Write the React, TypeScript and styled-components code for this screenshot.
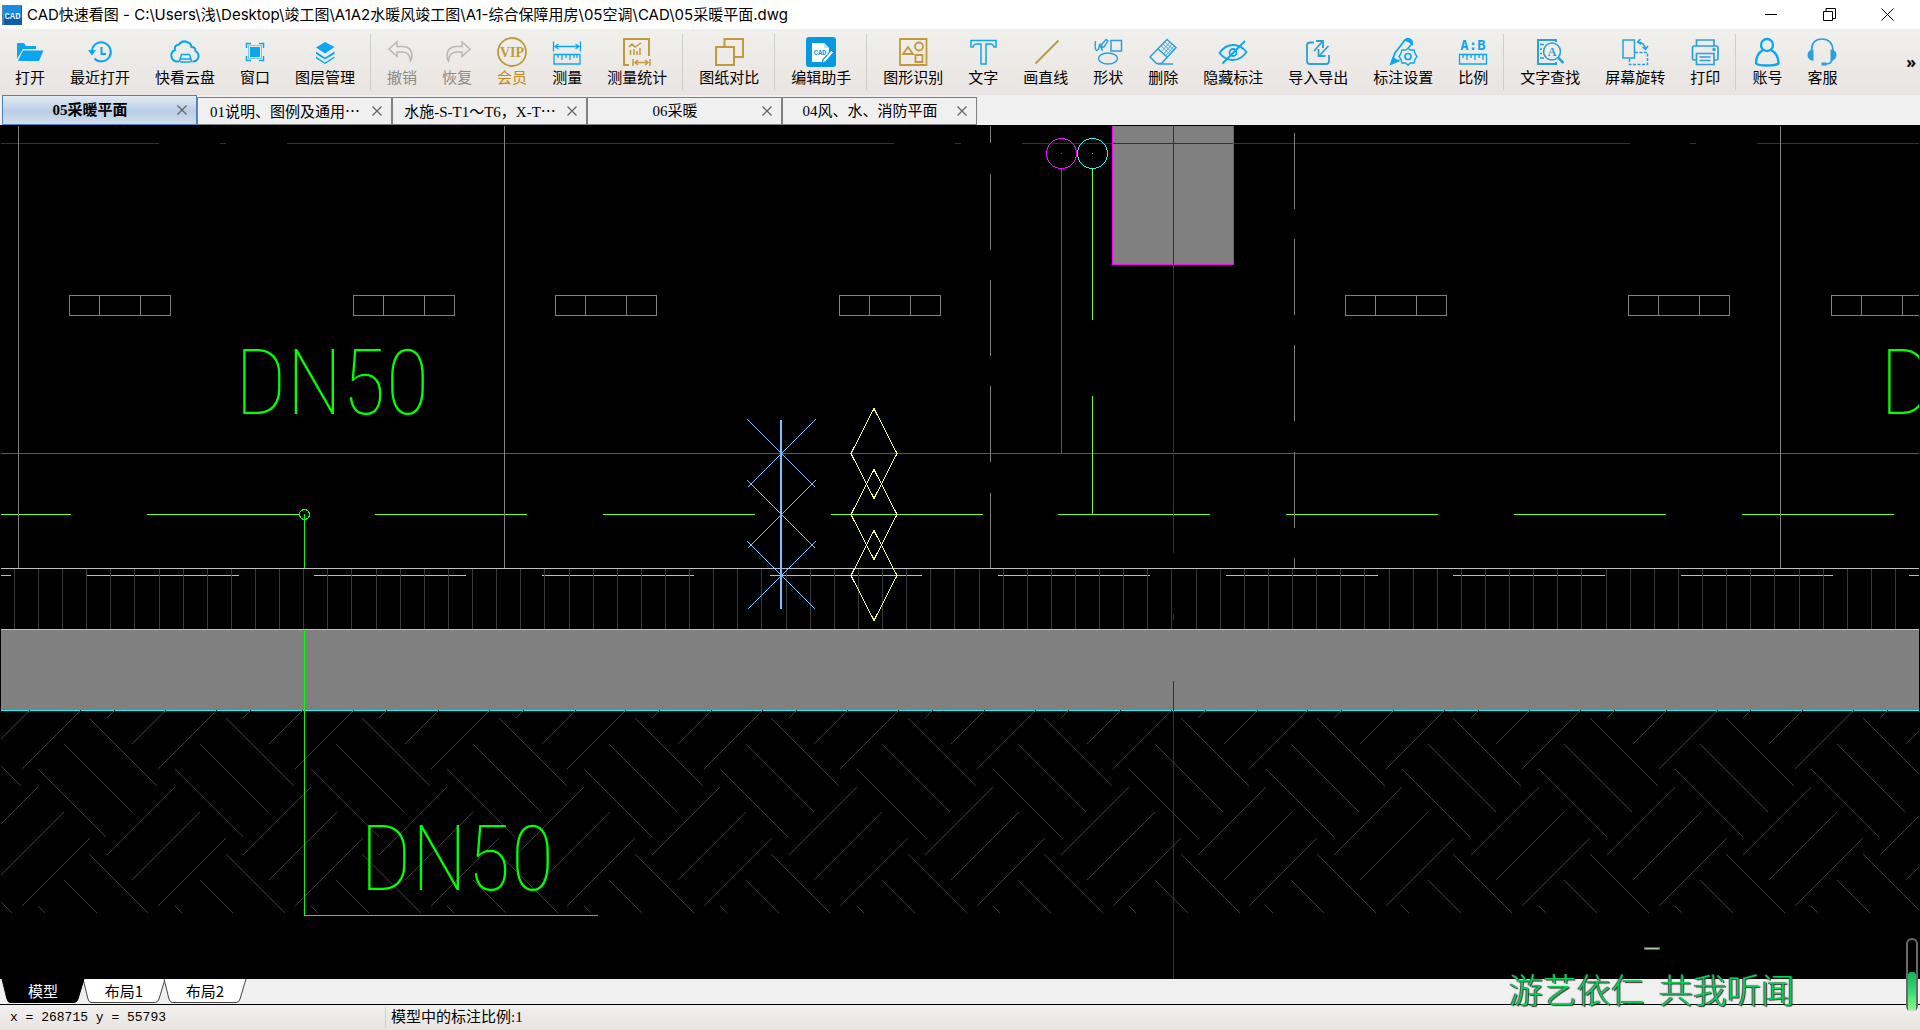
import React from "react";
import type { ReactNode } from "react";
import styled, { createGlobalStyle, css } from "styled-components";

const UI_FONT = `"Inter", "Noto Sans CJK SC", sans-serif`;
const CJK_FONT = `"Noto Sans CJK SC", sans-serif`;
const SONG_FONT = `"Liberation Serif", "Noto Sans CJK SC", sans-serif`;

const BLUE = "#0da6ee";
const STEEL = "#2ba0dc";
const GOLD = "#c09a3c";
const GREY = "#b8b8b6";

const GlobalStyle = createGlobalStyle`
  * { box-sizing: border-box; }
  body { margin: 0; background: #f0f0f0; overflow: hidden; }
  button { border: 0; padding: 0; margin: 0; background: none; color: inherit; font: inherit; }
`;

const Window = styled.main`
  display: flex;
  flex-direction: column;
  height: 100vh;
  font-family: ${CJK_FONT};
  font-size: 15px;
  color: #000;
`;

/* ---------- title bar ---------- */

const TitleBar = styled.header`
  display: flex;
  align-items: center;
  flex: none;
  height: 29px;
  padding: 0 4px 0 2px;
  background: #fff;
`;

const Title = styled.h1`
  flex: 1;
  margin: 0 0 0 5px;
  font: 400 15px/24px ${UI_FONT};
  white-space: nowrap;
`;

const CaptionButton = styled.button`
  display: flex;
  align-items: center;
  justify-content: center;
  width: 58px;
  height: 29px;
`;

/* ---------- toolbar ---------- */

const Toolbar = styled.nav`
  display: flex;
  flex: none;
  gap: 1px;
  height: 66px;
  padding: 0 4px 0 3px;
  background: linear-gradient(#f0f0ec, #e9e4e1);
`;

const Tool = styled.button<{ $tone?: "muted" | "gold" }>`
  display: flex;
  flex-direction: column;
  align-items: center;
  justify-content: flex-start;
  flex: none;
  padding: 8px 12px 0;
  font-size: 15px;
  line-height: 20px;
  white-space: nowrap;
  ${({ $tone }) => $tone === "muted" && css`color: #8c8a88;`}
  ${({ $tone }) => $tone === "gold" && css`color: #c08a22;`}
`;

const ToolDivider = styled.span`
  flex: none;
  width: 1px;
  margin: 5px 3px 5px 2px;
  background: #cdcfd0;
`;

const MoreButton = styled.button`
  margin-left: auto;
  font: 700 16px/60px "Noto Sans", sans-serif;
`;

/* ---------- document tabs ---------- */

const TabStrip = styled.div`
  display: flex;
  align-items: flex-end;
  flex: none;
  height: 30px;
  padding-left: 2px;
  background: #f0f0f0;
`;

const Tab = styled.div<{ $active?: boolean }>`
  display: flex;
  align-items: center;
  width: 195px;
  height: 28px;
  padding-right: 9px;
  border: 1px solid #808080;
  font-family: ${SONG_FONT};
  ${({ $active }) =>
    $active &&
    css`
      height: 30px;
      border-color: #4f81bd;
      font-weight: 700;
      background: linear-gradient(#e3ebf4, #b9cde5 55%, #d3dfec);
    `}
`;

const TabLabel = styled.button`
  flex: 1;
  line-height: 26px;
  white-space: nowrap;
`;

const Ellipsis = styled.span`
  font-family: ${CJK_FONT};
`;

const TabClose = styled.button`
  display: flex;
  width: 10px;
`;

/* ---------- drawing area ---------- */

const Canvas = styled.section`
  flex: 1;
  min-height: 0;
  background: #000;
`;

const Drawing = styled.svg`
  display: block;
  width: 100%;
  height: 100%;
  fill: none;
  shape-rendering: crispEdges;
`;

const PipeLabel = styled.text`
  fill: #00ff00;
  font: 100 90px "Roboto Condensed", "Roboto", sans-serif;
`;

/* ---------- layout tabs and status bar ---------- */

const LayoutStrip = styled.div`
  display: flex;
  flex: none;
  height: 26px;
  padding-left: 1px;
  border-bottom: 1px solid #000;
  background: #f0f0f0;
`;

const LayoutTab = styled.button<{ $active?: boolean }>`
  display: grid;
  place-items: center;
  width: 84px;
  height: 24px;
  margin-right: -3px;
  line-height: 24px;
  color: ${({ $active }) => ($active ? "#fff" : "#000")};
  z-index: ${({ $active }) => ($active ? 1 : 0)};

  > * {
    grid-area: 1 / 1;
  }
`;

const StatusBar = styled.footer`
  display: grid;
  grid-template-columns: 385px 1fr;
  align-items: center;
  flex: none;
  height: 25px;
  background: linear-gradient(#f0f0ec, #e9e4e1);
`;

const Coordinates = styled.output`
  padding-left: 10px;
  font: 13px/21px "Liberation Mono", monospace;
  white-space: pre;
`;

const ScaleNote = styled.span`
  padding-left: 5px;
  border-left: 1px solid #d0d0ce;
  font-family: ${SONG_FONT};
  line-height: 21px;
`;

/* ---------- desktop overlays ---------- */

const Lyric = styled.p`
  position: fixed;
  right: 125px;
  bottom: 18px;
  display: flex;
  gap: 14px;
  margin: 0;
  font: 300 34px/46px ${CJK_FONT};
  color: #04d455;
  text-shadow: 1px 1px 1px #333, -1px 0 1px #444;
`;

const Gauge = styled.div`
  position: fixed;
  right: 2px;
  bottom: 18px;
  display: flex;
  align-items: flex-end;
  width: 12px;
  height: 74px;
  border: 2px solid #6a6a6a;
  border-bottom-color: #d8d8d8;
  border-radius: 6px;
`;

const GaugeFill = styled.span`
  width: 8px;
  height: 38px;
  border-radius: 3px;
  background: linear-gradient(#12b458, #35d873 50%, #86ff86);
`;

const FloatDash = styled.span`
  position: fixed;
  right: 260px;
  bottom: 80px;
  width: 16px;
  height: 3px;
  border: 1px solid #4c6444;
  background: #a4cd98;
`;

/* ---------- icons ---------- */

const Icon = ({ color = BLUE, width = 1.5, children }: { color?: string; width?: number; children: ReactNode }) => (
  <svg width="30" height="30" viewBox="0 0 30 30" fill="none" stroke={color} strokeWidth={width} aria-hidden="true">
    {children}
  </svg>
);

const icons: Record<string, ReactNode> = {
  open: (
    <Icon>
      <path fill={BLUE} stroke="none" d="M2 7q0-1 1-1h6l2 3h10v3H8L2 22z" />
      <path fill={BLUE} stroke="none" d="M8 13.500h20.500L24 24H3z" />
    </Icon>
  ),
  recent: (
    <Icon width={2}>
      <path d="M7 13a9.500 9.500 0 1 1 2.500 8.500" />
      <path fill={BLUE} stroke="none" d="M3 13h8l-4 5.500z" />
      <path d="M16.500 10v7H21" />
    </Icon>
  ),
  cloud: (
    <Icon width={2}>
      <path d="M9 24.500H7A6 6 0 0 1 5 13q-1-5 4-5.500 3-4.500 8-2.500 4 1 4.500 5 4 0 4 4 3.500 2 3 6-1 4-5 4.500h-1" />
      <path strokeWidth="1.500" d="M11 25l-1.500-1 2-6.500h8l2 6.500-1.500 1zM10 22h11" />
    </Icon>
  ),
  window: (
    <Icon>
      <path d="M6.500 11V6.500H11M19 6.500h4.500V11M23.500 19v4.500H19M11 23.500H6.500V19" />
      <path fill={BLUE} stroke="none" d="M10 10h10v10H10z" />
      <path strokeWidth="1" d="M8.500 21.500v-13h13v13z" strokeOpacity=".5" />
    </Icon>
  ),
  layers: (
    <Icon>
      <path fill={BLUE} stroke="none" d="M15 5l9.500 5L15 16.500 6 10.500zM6 14.500l9 6 9.500-6v2.500L15 22.500 6 17zM6 19.500l9 6 9.500-6V21L15 27l-9-5.500z" />
    </Icon>
  ),
  undo: (
    <Icon color={GREY}>
      <path d="M2 12l8-7v4.500h6q9 .5 9 9.500 0 3-1.500 5-.5-9-8.500-9h-5v4.500z" />
    </Icon>
  ),
  redo: (
    <Icon color={GREY}>
      <path d="M28 12l-8-7v4.500h-6Q5 10 5 19q0 3 1.500 5Q7 15 15 15h5v4.500z" />
    </Icon>
  ),
  vip: (
    <Icon color={GOLD}>
      <circle cx="15" cy="15" r="14" strokeWidth="1.800" />
      <text x="15" y="20" textAnchor="middle" fontFamily="Liberation Serif, serif" fontWeight="700" fontSize="14" fill={GOLD} stroke="none">
        VIP
      </text>
    </Icon>
  ),
  measure: (
    <Icon width={1.3}>
      <path d="M1.500 4.500v10M28.500 4.500v10M3 9.500h24M6.500 7L3 9.500 6.500 12M23.500 7L27 9.500 23.500 12" />
      <path d="M2 17.500h26V27H2zM6 18v3M10 18v5M14 18v3M18 18v5M22 18v3M25 18v3" />
    </Icon>
  ),
  stats: (
    <Icon color={GOLD} width={2}>
      <path d="M7 28H2V2h25v17" />
      <path strokeWidth="1.500" d="M7 10l3-3 3 3 6-4M8.500 13v5M12 12v6M15 14v4M18 11v7" />
      <path d="M11 22v7M28 22v7M13 25.500h13M16 23l-3 2.500 3 2.500M23 23l3 2.500-3 2.500" strokeWidth="1.5" />
    </Icon>
  ),
  compare: (
    <Icon color={GOLD} width={2}>
      <path d="M10.500 10V2H29v18h-9" />
      <path d="M2 10h18v18H2z" />
    </Icon>
  ),
  editor: (
    <Icon color="none">
      <rect width="30" height="30" rx="3" fill="#0798e2" />
      <path fill="#fff" d="M6 6h12l5 5v4l-7 8v2H6z" />
      <path fill="#bfe4f8" d="M18 6l5 5h-5z" />
      <path fill="#fff" stroke="#0798e2" strokeWidth=".8" d="M25.500 13.500l2 2-8 9-3.500 1.500 1.500-3.500z" />
      <text x="14" y="18" textAnchor="middle" fontFamily="Liberation Mono, monospace" fontWeight="700" fontSize="7" fill="#0798e2">
        CAD
      </text>
    </Icon>
  ),
  shapesGold: (
    <Icon color={GOLD} width={1.8}>
      <path d="M2 2h26.500v26H2z" />
      <path d="M10 10l5 7H5zM17.500 18h7v7h-7z" />
      <circle cx="21" cy="9.500" r="4" />
    </Icon>
  ),
  text: (
    <Icon>
      <path d="M3 3.500h25V10h-2q-1-3-3-3h-5v20h-5V7H8q-2 0-3 3H3z" />
    </Icon>
  ),
  line: (
    <Icon color={GOLD} width={2}>
      <path d="M4.500 26.500l23-23" />
    </Icon>
  ),
  shapes: (
    <Icon color={STEEL}>
      <path d="M2.500 4q-1 9 1 9.500t3.500-7q1 6 3 7M8.500 11l.5-4L13 2.500l2 1.500-4 6z" />
      <path d="M18 3.500h10.500V14H18z" />
      <ellipse cx="15" cy="21.500" rx="9.500" ry="5.500" />
    </Icon>
  ),
  erase: (
    <Icon color={STEEL}>
      <path d="M19 2.500l9 8L13.500 26.500h-5L2 20zM10 12l9.500 8.500M10 27h15" />
      <path strokeWidth=".8" d="M17 5l9.500 8.500M15 7l9.500 8.500M13 9l9.500 8.500M22 5l-9 10M24 7l-8.500 10M26 9l-8.500 10" />
    </Icon>
  ),
  hide: (
    <Icon color={BLUE} width={1.8}>
      <path d="M1.500 16Q7 8 15 8t13.500 7Q23 23 15 23T1.500 16zM27 4L4.500 26.500" />
      <circle cx="15" cy="15.500" r="3.500" />
    </Icon>
  ),
  transfer: (
    <Icon color={STEEL} width={1.8}>
      <path d="M11 5.500H7q-3 0-3 3V24q0 3 3 3h16q3 0 3-3v-6" />
      <path d="M11 14l8-9M13 4h7v7M25.500 9L17 18M15.500 12v7h7" />
    </Icon>
  ),
  settings: (
    <Icon width={1.7}>
      <path d="M17 3L7 16 3.500 26l8-3M24 7l-4 4" />
      <path fill={BLUE} d="M17 3q4-3 7 1v3q-3-3-7-4zM5 21l5 3-7 3z" />
      <path d="M20 11.500l2.500 1.500h3.500l1 3.500 2 3-2 3-1 3.500h-3.500L20 28l-2.500-2H14l-1-3.500-2-3 2-3 1-3.500h3.500z" strokeWidth="1.400" />
      <circle cx="20" cy="19.500" r="3" />
    </Icon>
  ),
  ratio: (
    <Icon width={1.3}>
      <text x="15" y="13" textAnchor="middle" fontFamily="DejaVu Sans Mono, monospace" fontWeight="700" fontSize="14" fill={BLUE} stroke="none">
        A:B
      </text>
      <path d="M1.500 17.500h27V27h-27zM5 18v3M9 18v5M13 18v3M17 18v5M21 18v3M25 18v5" />
    </Icon>
  ),
  find: (
    <Icon color={STEEL} width={2}>
      <path d="M21 5V3H3v24h18v-2" />
      <path strokeWidth="1.300" d="M5 7.500h4M5 12h2M5 16.500h2M5 21h4" />
      <circle cx="17" cy="14.500" r="8.500" strokeWidth="1.600" />
      <path strokeWidth="2.500" d="M23 20.500l5.500 5.500" />
      <text x="17" y="18.500" textAnchor="middle" fontFamily="Liberation Serif, serif" fontWeight="700" fontSize="12" fill={STEEL} stroke="none">
        A
      </text>
    </Icon>
  ),
  rotate: (
    <Icon color={STEEL}>
      <path d="M3 3h11.500v18H3z" />
      <path strokeDasharray="3 1.500" d="M15 15.500h12.500v12h-18V21" />
      <path d="M18 5q6 0 7.500 7M20.500 2l-3 3 3.500 2.500M22.500 10l3 2.500 2.500-3.500" />
    </Icon>
  ),
  print: (
    <Icon color={STEEL} width={1.7}>
      <path d="M6.500 9V3H24v6M6.500 23H4q-1.500 0-1.500-1.500v-11Q2.500 9 4 9h22.500Q28 9 28 10.500v11q0 1.500-1.500 1.500H24" />
      <path d="M6.500 16.500H24v11H6.500zM9.500 20h11M9.500 23.500h11" />
      <circle cx="24" cy="12.500" r=".8" fill={STEEL} />
    </Icon>
  ),
  account: (
    <Icon width={2.3}>
      <circle cx="15" cy="8" r="6" />
      <path d="M11 13q-7 4-7 13.500 2 2 11 2t11.500-2Q26.500 17 19 13" />
    </Icon>
  ),
  support: (
    <Icon color={STEEL} width={1.7}>
      <path d="M4.500 15V13Q5 2 15 2t11 11v2M25 23q-1 4-6 4" />
      <path fill={STEEL} stroke="none" d="M6.500 12.500v11.500Q.5 23 .5 18t6-5.500zM23.500 12.500v11.500q6-1 6-6t-6-5.500zM14.500 25.500h5v3h-5z" />
    </Icon>
  ),
};

const toolGroups: { icon: string; label: string; tone?: "muted" | "gold" }[][] = [
  [
    { icon: "open", label: "打开" },
    { icon: "recent", label: "最近打开" },
    { icon: "cloud", label: "快看云盘" },
    { icon: "window", label: "窗口" },
    { icon: "layers", label: "图层管理" },
  ],
  [
    { icon: "undo", label: "撤销", tone: "muted" },
    { icon: "redo", label: "恢复", tone: "muted" },
    { icon: "vip", label: "会员", tone: "gold" },
    { icon: "measure", label: "测量" },
    { icon: "stats", label: "测量统计" },
  ],
  [{ icon: "compare", label: "图纸对比" }],
  [{ icon: "editor", label: "编辑助手" }],
  [
    { icon: "shapesGold", label: "图形识别" },
    { icon: "text", label: "文字" },
    { icon: "line", label: "画直线" },
    { icon: "shapes", label: "形状" },
    { icon: "erase", label: "删除" },
    { icon: "hide", label: "隐藏标注" },
    { icon: "transfer", label: "导入导出" },
    { icon: "settings", label: "标注设置" },
    { icon: "ratio", label: "比例" },
  ],
  [
    { icon: "find", label: "文字查找" },
    { icon: "rotate", label: "屏幕旋转" },
    { icon: "print", label: "打印" },
  ],
  [
    { icon: "account", label: "账号" },
    { icon: "support", label: "客服" },
  ],
];

const documents = [
  { name: "05采暖平面" },
  { name: "01说明、图例及通用", cut: true },
  { name: "水施-S-T1～T6，X-T", cut: true },
  { name: "06采暖" },
  { name: "04风、水、消防平面" },
];
const layouts = ["模型", "布局1", "布局2"];

/* ---------- plan drawing ---------- */

const range = (n: number) => Array.from({ length: n }, (_, i) => i);

const WALL_TOP = 629;
const WALL_BOTTOM = 710;
const HATCH_STEP = 136.4;
const HATCH_LENGTH = 68;

/* Lower end of each rising stroke and upper end of each falling one, within one hatch cell. */
const rising = [[21.2, 769.7], [131.8, 744], [106.1, 718.7]];
const falling = [[89.8, 718.5], [64.1, 744], [38.7, 769.7]];

const snap = (v: number) => Math.floor(v) + 0.5;

const EarthHatch = () => (
  <g stroke="#3a3a3a" clipPath="url(#earth)">
    {range(17).flatMap((col) =>
      range(4).map((row) => {
        const dx = (col - 1) * HATCH_STEP;
        const dy = (row - 1) * HATCH_STEP;
        return (
          <path
            key={`${col}-${row}`}
            d={[
              ...rising.map(([x, y]) => `M${snap(x + dx)} ${snap(y + dy)}l${HATCH_LENGTH} ${-HATCH_LENGTH}`),
              ...falling.map(([x, y]) => `M${snap(x + dx)} ${snap(y + dy)}l${HATCH_LENGTH} ${HATCH_LENGTH}`),
            ].join("")}
          />
        );
      })
    )}
  </g>
);

const Diffuser = ({ x }: { x: number }) => (
  <path stroke="#808080" d={`M${x + 0.5} 295.500h101v20h-101zm30 0v20m41-20v20`} />
);

const Plan = () => (
  <Drawing viewBox="0 125 1920 854" preserveAspectRatio="xMinYMin slice" role="img" aria-label="05采暖平面">
    <clipPath id="sheet">
      <path d="M1 126h1918v853H1z" />
    </clipPath>
    <clipPath id="earth">
      <path d="M1 710h1918v203H1z" />
    </clipPath>
    <g clipPath="url(#sheet)">
      <path fill="#808080" d={`M1 ${WALL_TOP}h1918V${WALL_BOTTOM}H1zM1112 126h122v139h-122z`} />
      <path stroke="#333" d="M1 143.500h158M220 143.500h6M287 143.500h607M955 143.500h6M1022 143.500h608M1690 143.500h6M1757 143.500h162" />
      <path stroke="#ff00ff" d="M1112.500 126v138.500h121V126" />
      <path stroke="#ff0a42" d="M1 453.500h1918M1061.500 169v284" />
      <path stroke="#80ff00" d="M1092.500 169v151M1092.500 396v118M1 514.500h70" />
      {range(8).map((i) => (
        <path key={i} stroke="#80ff00" d={`M${Math.round(147 + i * 227.86)} 514.500h152`} />
      ))}
      <path stroke="#808080" d="M18.500 126v442M504.500 126v442M1780.500 126v442" />
      <path stroke="#808080" d="M990.500 126v17M990.500 174v76M990.500 280v76M990.500 386v76M990.500 493v75" />
      <path stroke="#808080" d="M1294.500 133v76M1294.500 239v76M1294.500 345v76M1294.500 452v76M1294.500 558v10" />
      {[69, 353, 555, 839, 1345, 1628, 1831].map((x) => (
        <Diffuser key={x} x={x} />
      ))}
      <path stroke="#333" d="M1173.500 126v427M1173.500 614v6" />

      <path stroke="#c0c0c0" d={`M1 568.500h1918M1 ${WALL_TOP}.500h1918`} />
      <path stroke="#80ff00" d="M1 575.500h10" />
      {range(9).map((i) => (
        <path key={i} stroke="#80ff00" d={`M${Math.floor(87 + i * 227.8)} 575.500h152`} />
      ))}
      {range(79).map((i) => (
        <path key={i} stroke="#3a3a3a" d={`M${Math.floor(14.300 + i * 24.118)}.500 569v60`} />
      ))}

      <path stroke="#00ffff" d={`M1 ${WALL_BOTTOM}.500h1918`} />
      <EarthHatch />
      <path stroke="#333" d="M1173.500 681v298" />

      <circle cx="1061.500" cy="153.500" r="15" stroke="#ff00ff" />
      <circle cx="1092.500" cy="153.500" r="15" stroke="#00ffff" />
      <path stroke="#ff00ff" d="M1061 153.500h1" />
      <path stroke="#00ffff" d="M1092 153.500h1" />

      <circle cx="304.500" cy="514.500" r="5" stroke="#00ff00" />
      <path stroke="#00ff00" d="M304.500 514v54M304.500 629v286.500h293" />

      {[453.5, 514.5, 575.5].map((y) => (
        <g key={y}>
          <path stroke="#80c0ff" d={`M747.500 ${y - 34}l68 68M815.500 ${y - 34}l-68 68`} />
          <path stroke="#ffff80" d={`M874 ${y - 45}l23 45-23 45-23-45z`} />
        </g>
      ))}
      <path stroke="#80c0ff" strokeWidth="2" d="M781 420v189" />

      <PipeLabel x="235" y="414">DN50</PipeLabel>
      <PipeLabel x="360" y="890">DN50</PipeLabel>
      <PipeLabel x="1880" y="414">DN50</PipeLabel>
    </g>
  </Drawing>
);

const LayoutShape = ({ active }: { active: boolean }) => (
  <svg width="84" height="24" viewBox="0 0 84 24" fill={active ? "#000" : "#fff"} stroke={active ? "#000" : "#444"} aria-hidden="true">
    <path d="M1 0l5 20q1 3.500 3 3.500h64q3 0 4-3.500l6-20" />
  </svg>
);

export default function App() {
  return (
    <Window>
      <GlobalStyle />
      <TitleBar>
        <svg width="20" height="20" viewBox="0 0 20 20" aria-hidden="true">
          <path fill="#0b5cad" d="M0 0h20v20H0z" />
          <path fill="#1b8be0" d="M2 1h17v9H2z" />
          <path fill="#5f7f99" d="M0 0h2v20H0zM2 0h18v1H2z" />
          <text x="10.500" y="14" textAnchor="middle" fontFamily="Liberation Mono, monospace" fontWeight="700" fontSize="9" fill="#dff1ff">
            CAD
          </text>
        </svg>
        <Title>CAD快速看图 - C:\Users\浅\Desktop\竣工图\A1A2水暖风竣工图\A1-综合保障用房\05空调\CAD\05采暖平面.dwg</Title>
        <CaptionButton aria-label="最小化">
          <svg width="12" height="12" stroke="#000"><path d="M0 5.500h12" /></svg>
        </CaptionButton>
        <CaptionButton aria-label="还原">
          <svg width="13" height="13" fill="none" stroke="#000"><path d="M.5 3.500h9v9h-9zM3 3V.5h9.500v10H10" /></svg>
        </CaptionButton>
        <CaptionButton aria-label="关闭">
          <svg width="13" height="13" stroke="#000"><path d="M.5.5l12 12M12.500.5l-12 12" /></svg>
        </CaptionButton>
      </TitleBar>

      <Toolbar aria-label="工具栏">
        {toolGroups.map((group, i) => (
          <React.Fragment key={i}>
            {i > 0 && <ToolDivider />}
            {group.map(({ icon, label, tone }) => (
              <Tool key={label} $tone={tone}>
                {icons[icon]}
                {label}
              </Tool>
            ))}
          </React.Fragment>
        ))}
        <MoreButton>»</MoreButton>
      </Toolbar>

      <TabStrip>
        {documents.map(({ name, cut }, i) => (
          <Tab key={name} $active={i === 0}>
            <TabLabel>
              {name}
              {cut && <Ellipsis lang="zh-CN">…</Ellipsis>}
            </TabLabel>
            <TabClose aria-label={`关闭 ${name}`}>
              <svg width="10" height="10" stroke="#666" strokeWidth="1.300"><path d="M.5.5l9 9M9.500.5l-9 9" /></svg>
            </TabClose>
          </Tab>
        ))}
      </TabStrip>

      <Canvas>
        <Plan />
      </Canvas>

      <LayoutStrip>
        {layouts.map((name, i) => (
          <LayoutTab key={name} $active={i === 0}>
            <LayoutShape active={i === 0} />
            <span>{name}</span>
          </LayoutTab>
        ))}
      </LayoutStrip>

      <StatusBar>
        <Coordinates>x = 268715 y = 55793</Coordinates>
        <ScaleNote>模型中的标注比例:1</ScaleNote>
      </StatusBar>

      <FloatDash />
      <Lyric>
        <span>游艺依仁</span>
        <span>共我听闻</span>
      </Lyric>
      <Gauge>
        <GaugeFill />
      </Gauge>
    </Window>
  );
}
